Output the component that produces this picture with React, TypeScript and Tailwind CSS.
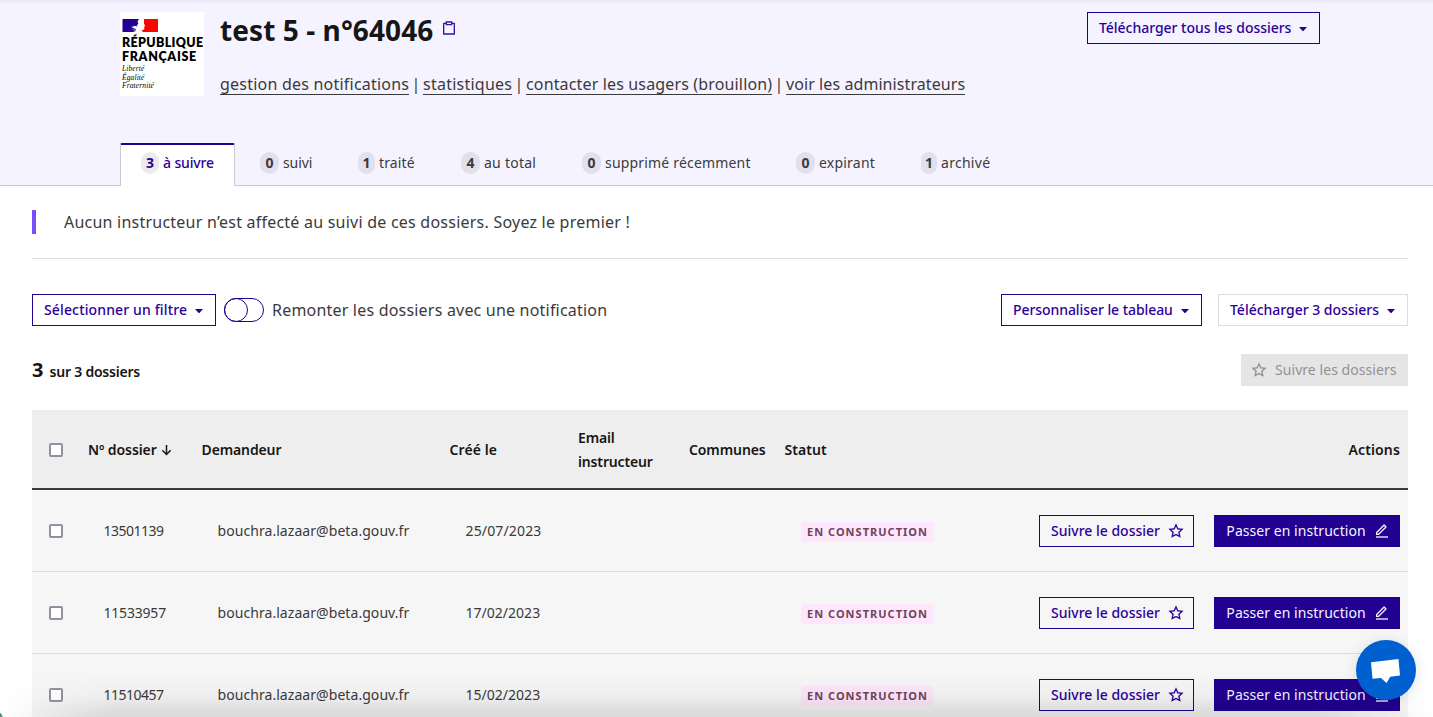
import { clsx } from "clsx";

const BLUE_OUTLINE = "border border-[#220092] text-[#2c0099]";

function Caret({ className = "ml-2" }: { className?: string }) {
  return (
    <svg className={clsx("h-2 w-2 shrink-0 translate-y-px", className)} viewBox="0 0 8 8">
      <path d="M0 2h8L4.6 5.8a.8.8 0 0 1-1.2 0z" fill="#2b008f" />
    </svg>
  );
}

function Star() {
  return (
    <svg className="h-4 w-4 shrink-0" viewBox="0 0 24 24" fill="currentColor">
      <path d="m12 18.26-7.053 3.948 1.575-7.928L.587 8.792l8.027-.952L12 .5l3.386 7.34 8.027.952-5.935 5.488 1.575 7.928L12 18.26Zm0-2.292 4.247 2.377-.949-4.773 3.573-3.305-4.833-.573L12 5.275l-2.038 4.42-4.833.572 3.573 3.305-.949 4.773L12 15.968Z" />
    </svg>
  );
}

function Pencil() {
  return (
    <svg className="h-4 w-4 shrink-0" viewBox="0 0 24 24" fill="currentColor">
      <path d="M6.414 16 16.556 5.858l-1.414-1.414L5 14.586V16h1.414Zm.829 2H3v-4.243L14.435 2.322a1 1 0 0 1 1.414 0l2.829 2.829a1 1 0 0 1 0 1.414L7.243 18Z" />
      <path d="M3 20h18v2H3z" />
    </svg>
  );
}

function Clipboard() {
  return (
    <svg className="h-4 w-4" viewBox="0 0 24 24" fill="#3a12a6">
      <path d="M7 4V2h10v2h3.007c.548 0 .993.445.993.993v16.014a.994.994 0 0 1-.993.993H3.993A.994.994 0 0 1 3 21.007V4.993C3 4.445 3.445 4 3.993 4H7Zm0 2H5v14h14V6h-2v2H7V6Zm2-2v2h6V4H9Z" />
    </svg>
  );
}

function Logo() {
  return (
    <div className="h-[84px] w-[84px] shrink-0 bg-white pt-[7px] pl-0.5 text-black">
      <svg className="block h-[13px] w-9" viewBox="0 0 36 13">
        <path d="M.5 0H17l-1.500 2.500.8 2-1.600 2.500L12 7l-2 2 3 .5 1 1.500-2 2H.5z" fill="#220092" />
        <path d="M22 0h14v13H21l-1.500-1.500 2-.8 1-1.200-.5-1.700 1.300-.8-1.300-2.300z" fill="#f60700" />
        <path d="M9 8.500 12 6.500M10.500 10.500 14 10M11 12l3-.5M14 8l1.500-1" stroke="#8f88bd" strokeWidth=".7" fill="none" />
      </svg>
      <div className="mt-[4px] font-['Lato',sans-serif] text-[12.500px] leading-[13.500px] font-extrabold whitespace-nowrap">
        <div className="tracking-[0.32px]">RÉPUBLIQUE</div>
        <div className="tracking-[0.65px]">FRANÇAISE</div>
      </div>
      <div className="mt-[2px] font-['Liberation_Serif',serif] text-[7.500px] leading-[8.700px] tracking-[0.12px] italic">
        <div>Liberté</div>
        <div>Égalité</div>
        <div>Fraternité</div>
      </div>
    </div>
  );
}

const TABS = [
  { count: 3, label: "à suivre", width: "w-[115px] pl-5", track: "tracking-[-0.13px]", pill: "w-[18px]", active: true },
  { count: 0, label: "suivi", width: "w-[98px]", track: "tracking-[-0.1px]", pill: "w-[19px]" },
  { count: 1, label: "traité", width: "w-[103px]", track: "tracking-[0.15px]", pill: "w-[17px]" },
  { count: 4, label: "au total", width: "w-[121px]", track: "tracking-[0.25px]", pill: "w-[19px]" },
  { count: 0, label: "supprimé récemment", width: "w-[214px]", track: "tracking-[0.18px]", pill: "w-[19px]" },
  { count: 0, label: "expirant", width: "w-[125px]", track: "tracking-[0.22px]", pill: "w-[19px]" },
  { count: 1, label: "archivé", width: "w-[90px]", track: "tracking-[0.28px]", pill: "w-4" },
];

const LINKS = [
  { label: "gestion des notifications", track: "tracking-[0.22px]", width: "w-[189px]" },
  { label: "statistiques", track: "tracking-[0.24px]", width: "w-[89px]" },
  { label: "contacter les usagers (brouillon)", track: "tracking-[0.15px]", width: "w-[246px]" },
  { label: "voir les administrateurs", track: "tracking-[0.08px]", width: "w-[179px]" },
];

const ROWS = [
  { id: "13501139", date: "25/07/2023", track: "tracking-[-0.5px]", dateTrack: "tracking-[0.15px]" },
  { id: "11533957", date: "17/02/2023", track: "tracking-[-0.2px]", dateTrack: "tracking-[0.02px]" },
  { id: "11510457", date: "15/02/2023", track: "tracking-[-0.5px]", dateTrack: "tracking-[0.02px]" },
];

const COLUMNS = "grid grid-cols-[48px_114px_248px_128px_111px_96px_1fr] items-center";

function Checkbox() {
  return <span className="ml-[17px] block h-3.5 w-3.5 rounded-[2px] border-2 border-[#9291a0] bg-white" />;
}

export default function App() {
  return (
    <div className="relative h-[717px] overflow-hidden bg-white font-['Noto_Sans',sans-serif] text-sm text-[#3a3a3a]">
      <header className="h-[186px] border-b border-[#cbc9d4] bg-[#f5f3ff]">
        <div className="flex h-[143px] px-[120px] pt-3 pr-[113px]">
          <Logo />
          <div className="ml-4 flex-1">
            <div className="flex h-9 items-center">
              <h1 className="w-[213px] text-[28px] leading-9 font-bold tracking-[0.08px] whitespace-nowrap text-[#161616]">test 5 - n°64046</h1>
              <span className="ml-2 -mt-1"><Clipboard /></span>
            </div>
            <nav className="mt-6 flex text-base leading-6 whitespace-nowrap">
              {LINKS.map((l, i) => (
                <div key={l.label} className="flex">
                  {i > 0 && <span className="w-3.5 text-center">|</span>}
                  <a className={clsx("block h-[23px] border-b border-[#3a3a3a]", l.width, l.track)}>{l.label}</a>
                </div>
              ))}
            </nav>
          </div>
          <button className={clsx("flex h-8 w-[233px] items-center pl-[11px] font-medium tracking-[-0.03px] whitespace-nowrap", BLUE_OUTLINE)}>
            Télécharger tous les dossiers
            <Caret />
          </button>
        </div>
        <ul className="flex pl-[120px]">
          {TABS.map((t, i) => (
            <li
              key={t.label}
              className={clsx(
                "flex h-[43px] shrink-0 whitespace-nowrap",
                t.width,
                i === 1 && "ml-[25px]",
                t.active ? "rounded-t-[2px] border-x border-t-2 border-x-[#cbc9d4] border-t-[#220092] bg-white font-medium text-[#2c0099]" : "pt-0.5",
              )}
            >
              <span className={clsx("mt-[7px] mr-1 h-[22px] rounded-full text-center leading-[22px] font-bold", t.pill, t.active ? "bg-[#ebebeb]" : "bg-[#e2e0ea]")}>
                {t.count}
              </span>
              <span className={clsx("mt-[7px] leading-[22px]", t.track)}>{t.label}</span>
            </li>
          ))}
        </ul>
      </header>

      <main className="px-8 pr-[25px] pt-6">
        <p className="h-6 border-l-4 border-[#7a4dfb] pl-7 text-base leading-6 tracking-[0.23px]">
          Aucun instructeur n’est affecté au suivi de ces dossiers. Soyez le premier !
        </p>
        <hr className="mt-6 border-[#dddddd]" />

        <div className="mt-[35px] flex h-8 items-center whitespace-nowrap">
          <button className={clsx("flex h-8 w-[184px] items-center pl-[11px] font-medium tracking-[0.14px]", BLUE_OUTLINE)}>
            Sélectionner un filtre
            <Caret />
          </button>
          <span className="ml-2 h-6 w-10 rounded-full border border-[#220092]">
            <span className="-mt-px -ml-px block h-6 w-6 rounded-full border border-[#220092]" />
          </span>
          <span className="ml-2 text-base tracking-[0.2px]">Remonter les dossiers avec une notification</span>
          <button className={clsx("ml-auto flex h-8 w-[201px] items-center pl-[11px] font-medium tracking-[-0.07px]", BLUE_OUTLINE)}>
            Personnaliser le tableau
            <Caret />
          </button>
          <button className="ml-4 flex h-8 w-[190px] items-center border border-[#dddddd] pl-[11px] font-medium tracking-[-0.02px] text-[#2c0099]">
            Télécharger 3 dossiers
            <Caret />
          </button>
        </div>

        <div className="mt-7 flex h-8 items-center justify-between">
          <h2 className="flex items-baseline font-semibold text-[#161616]">
            <span className="w-[17.500px] text-xl leading-8 font-bold">3</span>
            <span className="tracking-[-0.22px]">sur 3 dossiers</span>
          </h2>
          <button className="flex h-8 w-[167px] items-center bg-[#e5e5e5] pl-2.5 tracking-[0.06px] whitespace-nowrap text-[#929292]">
            <Star />
            <span className="ml-2">Suivre les dossiers</span>
          </button>
        </div>

        <div className="mt-6">
          <div className={clsx(COLUMNS, "h-20 border-b-2 border-[#3a3a3a] bg-[#eeeeee] pt-0.5 leading-6 font-semibold text-[#161616]")}>
            <div className="-mt-px"><Checkbox /></div>
            <div className="flex items-center pl-2 whitespace-nowrap">
              <span className="w-[69px] tracking-[-0.08px]">Nº dossier</span>
              <svg className="ml-1 h-3 w-[11px]" viewBox="0 0 11 12" fill="none" stroke="#161616" strokeWidth="1.500">
                <path d="M5.500 1v9.500M1.300 6.300l4.200 4.200 4.200-4.200" />
              </svg>
            </div>
            <div className="pl-[7.500px] tracking-[-0.12px]">Demandeur</div>
            <div className="pl-[7.500px] tracking-[0.08px]">Créé le</div>
            <div className="pl-2 tracking-[-0.15px]">Email<br />instructeur</div>
            <div className="pl-2 tracking-[-0.1px]">Communes</div>
            <div className="flex justify-between pr-2 pl-[7.500px]">
              <span className="tracking-[0.05px]">Statut</span>
              <span className="tracking-[0.15px]">Actions</span>
            </div>
          </div>
          {ROWS.map((r) => (
            <div key={r.id} className={clsx(COLUMNS, "h-[82px] border-b border-[#dddddd] bg-[#f6f6f6] whitespace-nowrap")}>
              <Checkbox />
              <div className={clsx("pl-[23.500px]", r.track)}>{r.id}</div>
              <div className="pl-[23.500px] tracking-[0.06px]">bouchra.lazaar@beta.gouv.fr</div>
              <div className={clsx("pl-[23.500px]", r.dateTrack)}>{r.date}</div>
              <div />
              <div />
              <div className="flex items-center pr-2 pl-6">
                <span className="mt-0.5 h-5 w-[133px] rounded-[4px] bg-[#fee7fc] pl-1.5 text-[11px] leading-5 font-bold tracking-[1.02px] text-[#6e445a]">EN CONSTRUCTION</span>
                <button className={clsx("ml-auto flex h-8 w-[155px] items-center pl-[11px] font-medium", BLUE_OUTLINE)}>
                  <span className="w-[109px]">Suivre le dossier</span>
                  <span className="ml-2"><Star /></span>
                </button>
                <button className="ml-5 flex h-8 w-[186px] items-center bg-[#220092] pl-3 tracking-[0.05px] text-[#f5f5fe]">
                  <span className="w-[140px]">Passer en instruction</span>
                  <span className="ml-2"><Pencil /></span>
                </button>
              </div>
            </div>
          ))}
        </div>
      </main>

      <div className="absolute inset-x-0 top-0 h-1 bg-gradient-to-b from-black/5 to-transparent" />
      <div className="absolute inset-x-0 bottom-0 h-11 bg-gradient-to-b from-transparent via-black/[0.03] to-black/[0.12] [mask-image:linear-gradient(to_right,transparent,black_110px,black_1310px,transparent)]" />
      <div className="absolute -bottom-[3px] -left-[5px] h-[9px] w-2 rounded-tr-full bg-[#5f8a68]" />
      <div className="absolute top-[640px] left-[1356px] flex h-[60px] w-[60px] items-center justify-center rounded-full bg-[#0060d0] shadow-[0_2px_14px_rgba(0,0,0,0.12)]">
        <svg className="h-[60px] w-[60px]" viewBox="0 0 60 60" fill="white">
          <path d="M15 22.200 42.500 19l1.500 16.500-9.800 1.200-3.700 6.300-5.500-5-8.500.8z" />
        </svg>
      </div>
    </div>
  );
}
